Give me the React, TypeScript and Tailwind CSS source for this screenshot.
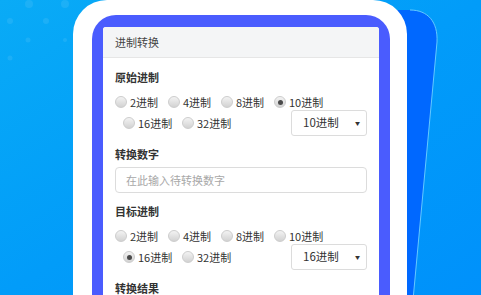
import React from "react";

const FONT = "font-['Noto_Sans_CJK_SC','Noto_Sans',sans-serif]";

function Radio({ checked }: { checked?: boolean }) {
  return (
    <span className="w-[12px] h-[12px] shrink-0 rounded-full bg-gradient-to-b from-[#f3f3f3] to-[#d2d2d2] border border-[#cdcdcd] flex items-center justify-center">
      {checked && <span className="w-[5px] h-[5px] rounded-full bg-[#4a4a4a]" />}
    </span>
  );
}

function Item({ label, checked, w }: { label: string; checked?: boolean; w: string }) {
  return (
    <div className={`flex items-center ${w}`}>
      <Radio checked={checked} />
      <span className="ml-[3px] text-[11px] leading-[16px] text-[#333]">{label}</span>
    </div>
  );
}

function Select({ value }: { value: string }) {
  return (
    <div className="ml-auto w-[76px] h-[26px] border border-[#dcdcdc] rounded-[3px] bg-white flex items-center pl-[11px] pr-[6px]">
      <span className="text-[11.5px] text-[#333]">{value}</span>
      <span className="ml-auto text-[5px] text-[#333]">▼</span>
    </div>
  );
}

function RadioGroup({ sel }: { sel: string }) {
  return (
    <>
      <div className="mt-[9px] h-[16px] flex items-center">
        <Item label="2进制" w="w-[53px]" checked={sel === "2"} />
        <Item label="4进制" w="w-[53px]" checked={sel === "4"} />
        <Item label="8进制" w="w-[53px]" checked={sel === "8"} />
        <Item label="10进制" w="w-[59px]" checked={sel === "10"} />
      </div>
      <div className="h-[26px] flex items-center pl-[8px]">
        <Item label="16进制" w="w-[59px]" checked={sel === "16"} />
        <Item label="32进制" w="w-[59px]" checked={sel === "32"} />
        <Select value={`${sel}进制`} />
      </div>
    </>
  );
}

function Title({ children, mt }: { children: React.ReactNode; mt: string }) {
  return <div className={`${mt} h-[16px] leading-[16px] text-[11px] font-bold text-[#333]`}>{children}</div>;
}

export default function App() {
  return (
    <div className={`relative w-[481px] h-[295px] overflow-hidden bg-gradient-to-br from-[#0aabf6] via-[#029cf9] to-[#0091fb] ${FONT}`}>
      <svg className="absolute inset-0" width="481" height="295" viewBox="0 0 481 295">
        <g fill="#ffffff" opacity="0.08">
          <circle cx="10" cy="21" r="3" />
          <circle cx="29" cy="4" r="4" />
          <circle cx="46" cy="21" r="3" />
          <circle cx="65" cy="4" r="4" />
          <circle cx="28" cy="40" r="2.5" />
          <circle cx="10" cy="58" r="2.5" />
          <circle cx="65" cy="40" r="2" />
        </g>
        <path d="M 380 10 L 410 10 C 428 10 438 22 437 42 L 413 300 L 380 300 Z" fill="#0068ff" />
        <path d="M 410 10 C 428 10 438 22 437 42 L 413 300" fill="none" stroke="#6fd0ff" strokeWidth="0.9" />
      </svg>
      <div className="relative ml-[73px] w-[334px] h-[310px] bg-white rounded-t-[34px] pt-[15px] pl-[19px]">
        <div className="w-[298px] h-[300px] bg-[#4a5cfe] rounded-t-[24px] pt-[12px] pl-[11px]">
          <div className="w-[276px] h-[290px] bg-white rounded-t-[3px] overflow-hidden">
            <div className="h-[31px] bg-[#f4f5f6] border-b border-[#e6e6e6] flex items-center pl-[12px] text-[11px] text-[#444]">
              进制转换
            </div>
            <div className="px-[12px]">
              <Title mt="mt-[11px]">原始进制</Title>
              <RadioGroup sel="10" />
              <Title mt="mt-[10px]">转换数字</Title>
              <div className="mt-[5px] h-[26px] border border-[#dcdcdc] rounded-[4px] flex items-center pl-[10px] text-[11px] text-[#a8a8a8]">
                在此输入待转换数字
              </div>
              <Title mt="mt-[10px]">目标进制</Title>
              <RadioGroup sel="16" />
              <Title mt="mt-[10px]">转换结果</Title>
            </div>
          </div>
        </div>
      </div>
    </div>
  );
}
